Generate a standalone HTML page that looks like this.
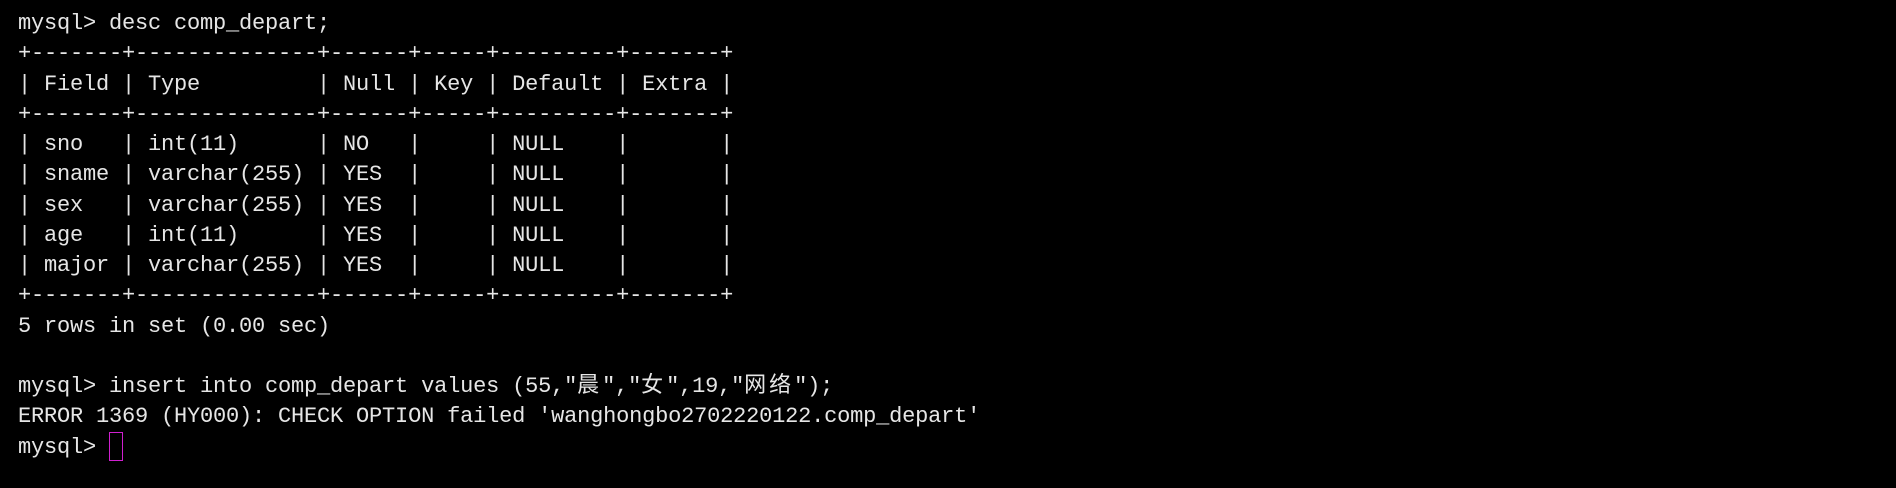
<!DOCTYPE html>
<html><head><meta charset="utf-8"><style>
html,body{margin:0;padding:0;background:#000;width:1896px;height:488px;overflow:hidden}
pre{position:absolute;left:18px;top:9px;margin:0;font-family:"Liberation Mono","Noto Sans CJK SC",monospace;font-size:22px;line-height:30.25px;color:#e6e6e6;letter-spacing:-0.2px}
.c{letter-spacing:3px}
.cur{position:absolute;left:109px;top:432px;width:12px;height:27px;border:1.5px solid #d020d0}
</style></head><body>
<pre>mysql&gt; desc comp_depart;
+-------+--------------+------+-----+---------+-------+
| Field | Type         | Null | Key | Default | Extra |
+-------+--------------+------+-----+---------+-------+
| sno   | int(11)      | NO   |     | NULL    |       |
| sname | varchar(255) | YES  |     | NULL    |       |
| sex   | varchar(255) | YES  |     | NULL    |       |
| age   | int(11)      | YES  |     | NULL    |       |
| major | varchar(255) | YES  |     | NULL    |       |
+-------+--------------+------+-----+---------+-------+
5 rows in set (0.00 sec)

mysql&gt; insert into comp_depart values (55,"<span class="c">晨</span>","<span class="c">女</span>",19,"<span class="c">网络</span>");
ERROR 1369 (HY000): CHECK OPTION failed 'wanghongbo2702220122.comp_depart'
mysql&gt; </pre>
<div class="cur"></div>
</body></html>
